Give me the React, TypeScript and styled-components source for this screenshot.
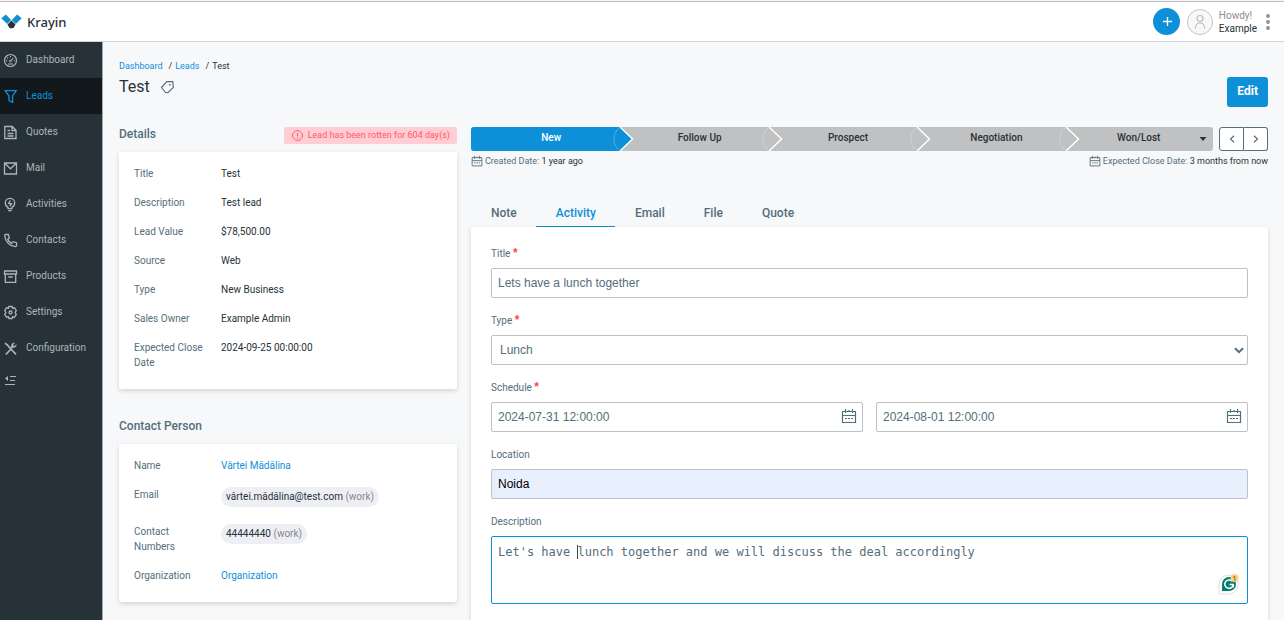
import React from 'react';
import styled, { createGlobalStyle, css } from 'styled-components';

const c = {
  blue: '#0e90d9',
  slate: '#546e7a',
  dark: '#263238',
  grey: '#c0c1c2',
  page: '#f7f8fa',
};

const Global = createGlobalStyle`
  * { box-sizing: border-box; }
  body { margin: 0; background: ${c.page}; color: ${c.dark}; font: 10px/15px Roboto, sans-serif; }
  #root { min-height: 100vh; display: flex; flex-direction: column; }
  button, input, select, textarea { font: inherit; margin: 0; }
  button { cursor: pointer; }
  a { color: ${c.blue}; text-decoration: none; }
  svg { display: block; flex: none; }
  h1, h2, dl, dd, dt, ol, ul { margin: 0; padding: 0; font-weight: 400; list-style: none; }
`;

const Page = styled.div`
  flex: 1;
  display: flex;
  flex-direction: column;
  border-top: 1px solid #f5f5f5;
`;

const TopBar = styled.header`
  height: 41px;
  display: flex;
  align-items: center;
  justify-content: space-between;
  padding: 0 13px 0 1px;
  background: #fff;
  border-top: 1px solid #bfbfbf;
  border-bottom: 1px solid #d0d4d7;
`;

const Brand = styled.a`
  display: flex;
  align-items: center;
  gap: 5px;
  color: ${c.dark};
  font: 500 13px/18px 'Noto Sans', sans-serif;
`;

const UserArea = styled.div`
  display: flex;
  align-items: center;
`;

const AddButton = styled.button`
  width: 27px;
  height: 27px;
  display: grid;
  place-items: center;
  padding: 0 0 0 3px;
  border: 0;
  border-radius: 50%;
  background: ${c.blue};
  color: #fff;
`;

const Avatar = styled.span`
  width: 26px;
  height: 26px;
  margin: 0 6px 0 7px;
  display: grid;
  place-items: center;
  border: 1px solid #c4c4c4;
  border-radius: 50%;
  background: #f7f8f9;
  color: #b9bcbe;
`;

const UserName = styled.div`
  display: flex;
  flex-direction: column;
  line-height: 13px;
  margin-right: 8px;
  span { color: #8e8e8e; }
`;

const MoreButton = styled.button`
  border: 0;
  padding: 0;
  background: none;
  color: #8e8e8e;
`;

const Shell = styled.div`
  flex: 1;
  display: flex;
`;

const Sidebar = styled.nav`
  width: 103px;
  flex: none;
  background: #263238;
  border-right: 1px solid #a3a8ab;
`;

const NavLink = styled.a<{ $active?: boolean }>`
  height: 36px;
  display: flex;
  align-items: center;
  gap: 8px;
  padding: 0 3px;
  color: ${(p) => (p.$active ? c.blue : '#adb5b9')};
  background: ${(p) => (p.$active ? '#12181b' : 'transparent')};
  span { padding-bottom: 2px; }
`;

const Collapse = styled.button`
  display: block;
  padding: 9px 4px;
  border: 0;
  background: none;
  color: #a9b4ba;
`;

const Main = styled.main`
  flex: 1;
  min-width: 0;
  display: flex;
  flex-direction: column;
  padding: 18px 16px 0;
`;

const PageHead = styled.div`
  display: flex;
  justify-content: space-between;
  align-items: flex-end;
  margin-bottom: 20px;
`;

const Crumbs = styled.ol`
  display: flex;
  font-size: 9px;
  line-height: 12px;
  margin-bottom: 5px;
  li + li::before { content: '/'; margin: 0 3px 0 6px; }
`;

const TitleRow = styled.div`
  display: flex;
  align-items: center;
  gap: 10px;
  padding-bottom: 10px;
  color: ${c.slate};
`;

const Title = styled.h1`
  color: ${c.dark};
  font-size: 16px;
  line-height: 20px;
`;

const EditButton = styled.button`
  height: 30px;
  padding: 0 10px 2px;
  border: 0;
  border-radius: 3px;
  background: ${c.blue};
  color: #fff;
  font-size: 12px;
  font-weight: 700;
`;

const Columns = styled.div`
  flex: 1;
  display: grid;
  grid-template-columns: 338px minmax(0, 1fr);
  gap: 14px;
`;

const Side = styled.div`
  display: flex;
  flex-direction: column;
  gap: 30px;
`;

const Work = styled.div`
  display: flex;
  flex-direction: column;
`;

const SectionHead = styled.div`
  height: 17px;
  display: flex;
  justify-content: space-between;
  margin-bottom: 8px;
`;

const SectionTitle = styled.h2`
  color: ${c.slate};
  font-size: 12px;
  line-height: 14px;
  font-weight: 500;
`;

const RottenBadge = styled.span`
  display: flex;
  align-items: center;
  gap: 5px;
  padding: 0 7px 0 8px;
  border-radius: 2px;
  background: #ffcdd3;
  color: #ff5a5f;
  font-size: 9px;
`;

const cardShadow = css`
  background: #fff;
  border-radius: 2px;
  box-shadow: 0 2px 5px rgba(0, 0, 0, 0.14);
`;

const DetailCard = styled.dl`
  ${cardShadow}
  display: flex;
  flex-direction: column;
  gap: 14px;
  padding: 14px 15px 19px;
`;

const DetailRow = styled.div`
  display: grid;
  grid-template-columns: 75px 1fr;
  gap: 12px;
  dt { color: ${c.slate}; }
`;

const Pill = styled.span`
  display: inline-block;
  height: 20px;
  margin-bottom: 3px;
  padding: 2px 5px;
  border-radius: 10px;
  background: #eeeff5;
  vertical-align: top;
  span { color: #888; }
`;

const StageRow = styled.div`
  display: flex;
  gap: 6px;
`;

const Stages = styled.ol`
  flex: 1;
  display: grid;
  grid-template-columns: repeat(5, 1fr);
  border-radius: 3px;
  overflow: hidden;
  background: ${c.grey};
`;

const Stage = styled.li<{ $active?: boolean }>`
  position: relative;
  height: 24px;
  padding: 0 0 3px 12px;
  text-align: center;
  line-height: 21px;
  font-weight: 500;
  color: ${(p) => (p.$active ? '#fff' : c.dark)};
  background: ${(p) => (p.$active ? c.blue : 'transparent')};
  &:last-child { padding-left: 0; }
`;

const StageArrow = styled.svg`
  position: absolute;
  z-index: 1;
  top: 0;
  right: -15px;
`;

const StageCaret = styled.svg`
  position: absolute;
  top: 10px;
  right: 6px;
`;

const StageNav = styled.div`
  display: flex;
`;

const StageNavButton = styled.button`
  width: 25px;
  height: 24px;
  padding: 0;
  display: grid;
  place-items: center;
  border: 1px solid ${c.slate};
  background: #fff;
  color: ${c.slate};
  border-radius: 3px 0 0 3px;
  & + & { border-left: 0; width: 24px; border-radius: 0 3px 3px 0; }
`;

const DateRow = styled.div`
  display: flex;
  justify-content: space-between;
  margin: 4px 0 32px;
  font-size: 9px;
  line-height: 12px;
`;

const DateInfo = styled.span`
  display: flex;
  align-items: center;
  gap: 2px;
  color: ${c.slate};
  b { font-weight: 400; color: ${c.dark}; }
`;

const Tabs = styled.div`
  display: flex;
`;

const Tab = styled.button<{ $active?: boolean }>`
  height: 28px;
  padding: 1px 19px 0 20px;
  border: 0;
  border-bottom: 1px solid ${(p) => (p.$active ? c.blue : 'transparent')};
  background: none;
  color: ${(p) => (p.$active ? c.blue : c.slate)};
  font-size: 12px;
  font-weight: 500;
`;

const FormCard = styled.form`
  ${cardShadow}
  flex: 1;
  display: flex;
  flex-direction: column;
  gap: 14px;
  padding: 18px 20px 16px;
  border-radius: 2px 2px 0 0;
`;

const Field = styled.div`
  display: flex;
  flex-direction: column;
`;

const Label = styled.label`
  margin-bottom: 5px;
  color: ${c.slate};
  line-height: 18px;
  b { color: #ff4848; font: 700 12px/1 'Liberation Sans', sans-serif; }
`;

const control = css`
  width: 100%;
  height: 30px;
  border: 1px solid ${c.grey};
  border-radius: 2px;
  background: #fff;
  color: ${c.slate};
  font: 12px/16px 'Liberation Sans', sans-serif;
  outline: 0;
`;

const TextInput = styled.input<{ $filled?: boolean }>`
  ${control}
  padding: 0 6px;
  ${(p) => p.$filled && css`background: #e8effd; color: #000;`}
`;

const SelectWrap = styled.div`
  position: relative;
  svg { position: absolute; top: 12px; right: 4px; color: ${c.slate}; pointer-events: none; }
`;

const Select = styled.select`
  ${control}
  appearance: none;
  padding: 0 8px;
`;

const DatePair = styled.div`
  display: grid;
  grid-template-columns: 1fr 1fr;
  gap: 13px;
`;

const DateWrap = styled.div`
  position: relative;
  svg { position: absolute; top: 6px; right: 6px; color: ${c.slate}; pointer-events: none; }
`;

const AreaWrap = styled.div`
  position: relative;
  font: 12px/14px 'DejaVu Sans Mono', monospace;
`;

const Area = styled.textarea`
  ${control}
  display: block;
  height: 68px;
  padding: 8px 6px;
  border-color: ${c.blue};
  resize: none;
  font: inherit;
`;

const TextCursor = styled.span`
  position: absolute;
  top: 9px;
  left: calc(7px + 11ch);
  width: 1px;
  height: 14px;
  background: #444;
`;

const Checker = styled.svg`
  position: absolute;
  right: 9px;
  bottom: 9px;
`;

type Glyph = { children: React.ReactNode; size?: number; width?: number };
const Icon = ({ children, size = 15, width = 1.3 }: Glyph) => (
  <svg width={size} height={size} viewBox="0 0 15 15" fill="none" stroke="currentColor" strokeWidth={width} aria-hidden="true">
    {children}
  </svg>
);

const CalendarIcon = ({ size }: { size: number }) => (
  <svg width={size} height={size} viewBox="0 0 16 16" fill="none" stroke="currentColor" strokeWidth="1.2" aria-hidden="true">
    <path d="M1.500 3.500h13v11h-13zM1.500 7.500h13M4.500 1v4M11.500 1v4M8 2v2" />
    <path d="M4 10.500h2M7 10.500h2M10 10.500h2" />
  </svg>
);

const nav: { name: string; icon: React.ReactNode; active?: boolean }[] = [
  {
    name: 'Dashboard',
    icon: (
      <>
        <circle cx="7.500" cy="7.500" r="6" strokeWidth="1.200" />
        <path d="M8 7.600 10.400 5M3 7.800h1.300M10.800 7.800H12M7.500 3v1.200M4.300 4.700l.8.8M5 11h5" strokeWidth="1.100" />
        <circle cx="7.300" cy="8.200" r=".9" strokeWidth=".9" />
      </>
    ),
  },
  { name: 'Leads', active: true, icon: <path d="M2.200 1.700h11L9.600 7v6.300L6 11.600V7z" /> },
  {
    name: 'Quotes',
    icon: <path d="M1.800 1.500h7.400l3.800 3.700v8.300H1.800zM9 1.500v4h4M4.500 5.500h2.600M4.500 8.500h6M4.500 11h6" />,
  },
  { name: 'Mail', icon: <path d="M1.500 2h12v11h-12zM1.800 2.300l5.700 5.500 5.700-5.500" /> },
  {
    name: 'Activities',
    icon: (
      <>
        <path d="M5 10.400C3.400 9.600 2.300 8 2.300 6.100a4.700 4.700 0 0 1 9.400 0c0 1.900-1.100 3.500-2.700 4.300v1.300H5zM5.200 13.700h3.600" />
        <path d="M7.400 3.500 5.600 6.600h2.900L6.900 9.300" />
      </>
    ),
  },
  {
    name: 'Contacts',
    icon: (
      <path d="M2.600 1.500h2.700l1 3.600-1.600 1.300c.9 1.900 2.200 3.100 4 4l1.300-1.700 3.500 1v2.800c0 .7-.5 1.200-1.200 1.100C6.600 13.100 2.400 8.800 1.700 2.700c-.1-.7.3-1.200.9-1.200z" />
    ),
  },
  { name: 'Products', icon: <path d="M1.500 2h12v3h-12zM2.300 5h10.400v8.300H2.300zM5.300 8h4.400" /> },
  {
    name: 'Settings',
    icon: (
      <>
        <path d="M5.900 1.500h3.200l.5 1.700 1.800-.4 1.900 2.700-1.200 2 1.200 2-1.900 2.700-1.800-.4-.5 1.700H5.900l-.5-1.700-1.800.4-1.900-2.700 1.200-2-1.200-2 1.900-2.700 1.800.4z" />
        <circle cx="7.500" cy="7.500" r="1.500" />
      </>
    ),
  },
  {
    name: 'Configuration',
    icon: (
      <>
        <path d="M2 2.200 5.500 5M2.800 13.500l5.800-6M5 5l8 8.300" strokeWidth="1.700" />
        <path d="M13.300 3.800 11.400 5.200 10 3.900l1.500-2.100C9.500 1.600 8.200 3 8.600 4.800L7.400 6l1.500 1.600 1.400-1.200c1.900.4 3.300-.8 3-2.600z" fill="currentColor" strokeWidth=".3" />
      </>
    ),
  },
];

const details: [string, string][] = [
  ['Title', 'Test'],
  ['Description', 'Test lead'],
  ['Lead Value', '$78,500.00'],
  ['Source', 'Web'],
  ['Type', 'New Business'],
  ['Sales Owner', 'Example Admin'],
  ['Expected Close Date', '2024-09-25 00:00:00'],
];

const stages = ['New', 'Follow Up', 'Prospect', 'Negotiation', 'Won/Lost'];
const tabs = ['Note', 'Activity', 'Email', 'File', 'Quote'];

export default function App() {
  return (
    <Page>
      <Global />
      <TopBar>
        <Brand href="#">
          <svg width="21" height="15" viewBox="0 0 21 15" aria-hidden="true">
            <path d="M.3 4.200 4.900.5l5.300 5.400L6.200 9.900z" fill={c.blue} />
            <path d="M20.700 4.200 16.100.5l-5.300 5.400 4 4z" fill={c.blue} />
            <path d="M10.500 6.600 14.500 10.600 13 13.300Q12.400 14.300 11.400 14.300H9.600Q8.600 14.300 8 13.300L6.500 10.600z" fill={c.dark} />
          </svg>
          Krayin
        </Brand>
        <UserArea>
          <AddButton aria-label="Add">
            <svg width="11" height="11" viewBox="0 0 11 11" stroke="currentColor" strokeWidth="1.300"><path d="M5.500 1v9M1 5.500h9" /></svg>
          </AddButton>
          <Avatar>
            <svg width="12" height="16" viewBox="0 0 12 16" fill="none" stroke="currentColor" strokeWidth="1.200">
              <circle cx="6" cy="4.500" r="3" />
              <path d="M1.500 14.500v-1a4.500 4.500 0 0 1 9 0v1" />
            </svg>
          </Avatar>
          <UserName><span>Howdy!</span>Example</UserName>
          <MoreButton aria-label="More">
            <svg width="6" height="18" viewBox="0 0 6 18" fill="currentColor">
              <circle cx="3" cy="3" r="1.900" /><circle cx="3" cy="9" r="1.900" /><circle cx="3" cy="15" r="1.900" />
            </svg>
          </MoreButton>
        </UserArea>
      </TopBar>
      <Shell>
        <Sidebar>
          {nav.map((n) => (
            <NavLink key={n.name} href="#" $active={n.active}>
              <Icon>{n.icon}</Icon>
              <span>{n.name}</span>
            </NavLink>
          ))}
          <Collapse aria-label="Collapse menu">
            <svg width="12" height="10" viewBox="0 0 12 10" fill="none" stroke="currentColor">
              <path d="M6 1.500h6M6 5.500h5M1 9.500h10" />
              <path d="M4 1 1 3.500 4 6z" fill="currentColor" stroke="none" />
            </svg>
          </Collapse>
        </Sidebar>
        <Main>
          <PageHead>
            <div>
              <Crumbs>
                <li><a href="#">Dashboard</a></li>
                <li><a href="#">Leads</a></li>
                <li>Test</li>
              </Crumbs>
              <TitleRow>
                <Title>Test</Title>
                <svg width="15" height="14" viewBox="0 0 15 14" fill="none" stroke="currentColor" strokeWidth="1.200" aria-hidden="true">
                  <path d="M1.500 7.500 6.700 1.700 12.800 1.500 13.300 7.300 8 12.600 5.500 12.500z" strokeLinejoin="round" />
                  <circle cx="9.800" cy="4.800" r=".9" fill="currentColor" stroke="none" />
                </svg>
              </TitleRow>
            </div>
            <EditButton>Edit</EditButton>
          </PageHead>
          <Columns>
            <Side>
              <section>
                <SectionHead>
                  <SectionTitle>Details</SectionTitle>
                  <RottenBadge>
                    <svg width="11" height="11" viewBox="0 0 11 11" fill="none" stroke="currentColor" aria-hidden="true">
                      <path d="m3.500 1 2-.5 2 .5L9 2.300l1.300 1.600v3.200L9 8.700 7.500 10l-2 .4-2-.4L2 8.700.7 7.100V3.900L2 2.300z" />
                      <path d="M5.500 2.800v3.500M5.500 7.300v1.200" />
                    </svg>
                    Lead has been rotten for 604 day(s)
                  </RottenBadge>
                </SectionHead>
                <DetailCard>
                  {details.map(([k, v]) => (
                    <DetailRow key={k}><dt>{k}</dt><dd>{v}</dd></DetailRow>
                  ))}
                </DetailCard>
              </section>
              <section>
                <SectionHead><SectionTitle>Contact Person</SectionTitle></SectionHead>
                <DetailCard>
                  <DetailRow><dt>Name</dt><dd><a href="#">Vârtei Mădălina</a></dd></DetailRow>
                  <DetailRow><dt>Email</dt><dd><Pill>vârtei.mădălina@test.com <span>(work)</span></Pill></dd></DetailRow>
                  <DetailRow><dt>Contact Numbers</dt><dd><Pill>44444440 <span>(work)</span></Pill></dd></DetailRow>
                  <DetailRow><dt>Organization</dt><dd><a href="#">Organization</a></dd></DetailRow>
                </DetailCard>
              </section>
            </Side>
            <Work>
              <StageRow>
                <Stages>
                  {stages.map((s, i) => (
                    <Stage key={s} $active={i === 0}>
                      {s}
                      {i < 4 ? (
                        <StageArrow width="21" height="24" viewBox="0 0 21 24" fill="none" aria-hidden="true">
                          <path d="M6 0h2l11.500 12L8 24H6z" fill={i === 0 ? c.blue : c.grey} />
                          <path d="M7 0 19.500 12 7 24" stroke="#fff" strokeWidth="1.500" />
                          <path d="M6 1Q1 5 1 12t5 11" stroke="#fff" strokeOpacity=".5" strokeWidth=".8" strokeDasharray="2 1" />
                        </StageArrow>
                      ) : (
                        <StageCaret width="8" height="4" viewBox="0 0 8 4" aria-hidden="true">
                          <path d="M.500 0h7L4 4z" fill={c.dark} />
                        </StageCaret>
                      )}
                    </Stage>
                  ))}
                </Stages>
                <StageNav>
                  <StageNavButton aria-label="Previous lead">
                    <svg width="6" height="8" viewBox="0 0 6 8" fill="none" stroke="currentColor" strokeWidth="1.200"><path d="M5 .700 1.500 4 5 7.300" /></svg>
                  </StageNavButton>
                  <StageNavButton aria-label="Next lead">
                    <svg width="6" height="8" viewBox="0 0 6 8" fill="none" stroke="currentColor" strokeWidth="1.200"><path d="M1 .700 4.500 4 1 7.300" /></svg>
                  </StageNavButton>
                </StageNav>
              </StageRow>
              <DateRow>
                <DateInfo><CalendarIcon size={12} /><span>Created Date: <b>1 year ago</b></span></DateInfo>
                <DateInfo><CalendarIcon size={12} /><span>Expected Close Date: <b>3 months from now</b></span></DateInfo>
              </DateRow>
              <Tabs>
                {tabs.map((t) => <Tab key={t} type="button" $active={t === 'Activity'}>{t}</Tab>)}
              </Tabs>
              <FormCard>
                <Field>
                  <Label htmlFor="title">Title <b>*</b></Label>
                  <TextInput id="title" defaultValue="Lets have a lunch together" />
                </Field>
                <Field>
                  <Label htmlFor="type">Type <b>*</b></Label>
                  <SelectWrap>
                    <Select id="type" defaultValue="Lunch"><option>Lunch</option></Select>
                    <svg width="10" height="7" viewBox="0 0 10 7" fill="none" stroke="currentColor" strokeWidth="2"><path d="M1 1.200 5 5.200 9 1.200" /></svg>
                  </SelectWrap>
                </Field>
                <Field>
                  <Label htmlFor="from">Schedule <b>*</b></Label>
                  <DatePair>
                    <DateWrap>
                      <TextInput id="from" defaultValue="2024-07-31 12:00:00" />
                      <CalendarIcon size={16} />
                    </DateWrap>
                    <DateWrap>
                      <TextInput aria-label="Schedule end" defaultValue="2024-08-01 12:00:00" />
                      <CalendarIcon size={16} />
                    </DateWrap>
                  </DatePair>
                </Field>
                <Field>
                  <Label htmlFor="location">Location</Label>
                  <TextInput id="location" $filled defaultValue="Noida" />
                </Field>
                <Field>
                  <Label htmlFor="description">Description</Label>
                  <AreaWrap>
                    <Area id="description" defaultValue="Let's have lunch together and we will discuss the deal accordingly" />
                    <TextCursor />
                    <Checker width="21" height="22" viewBox="0 0 21 22" aria-hidden="true">
                      <path d="M1 21V11.500A9.500 9.500 0 1 1 10.500 21z" fill="#fff" stroke="#dcdfe6" />
                      <path d="M4 18v-7a7 7 0 1 1 7 7z" fill="#027e6f" />
                      <path d="M14 8.200A4.200 4.200 0 1 0 15.200 11.500H11.500M15.200 11.500v3" fill="none" stroke="#fff" strokeWidth="1.500" />
                      <circle cx="16.500" cy="5" r="4" fill="#ffd186" />
                      <text x="16.500" y="7.500" fontFamily="Roboto, sans-serif" fontSize="7" fontWeight="700" textAnchor="middle" fill="#a06c10">1</text>
                    </Checker>
                  </AreaWrap>
                </Field>
              </FormCard>
            </Work>
          </Columns>
        </Main>
      </Shell>
    </Page>
  );
}
